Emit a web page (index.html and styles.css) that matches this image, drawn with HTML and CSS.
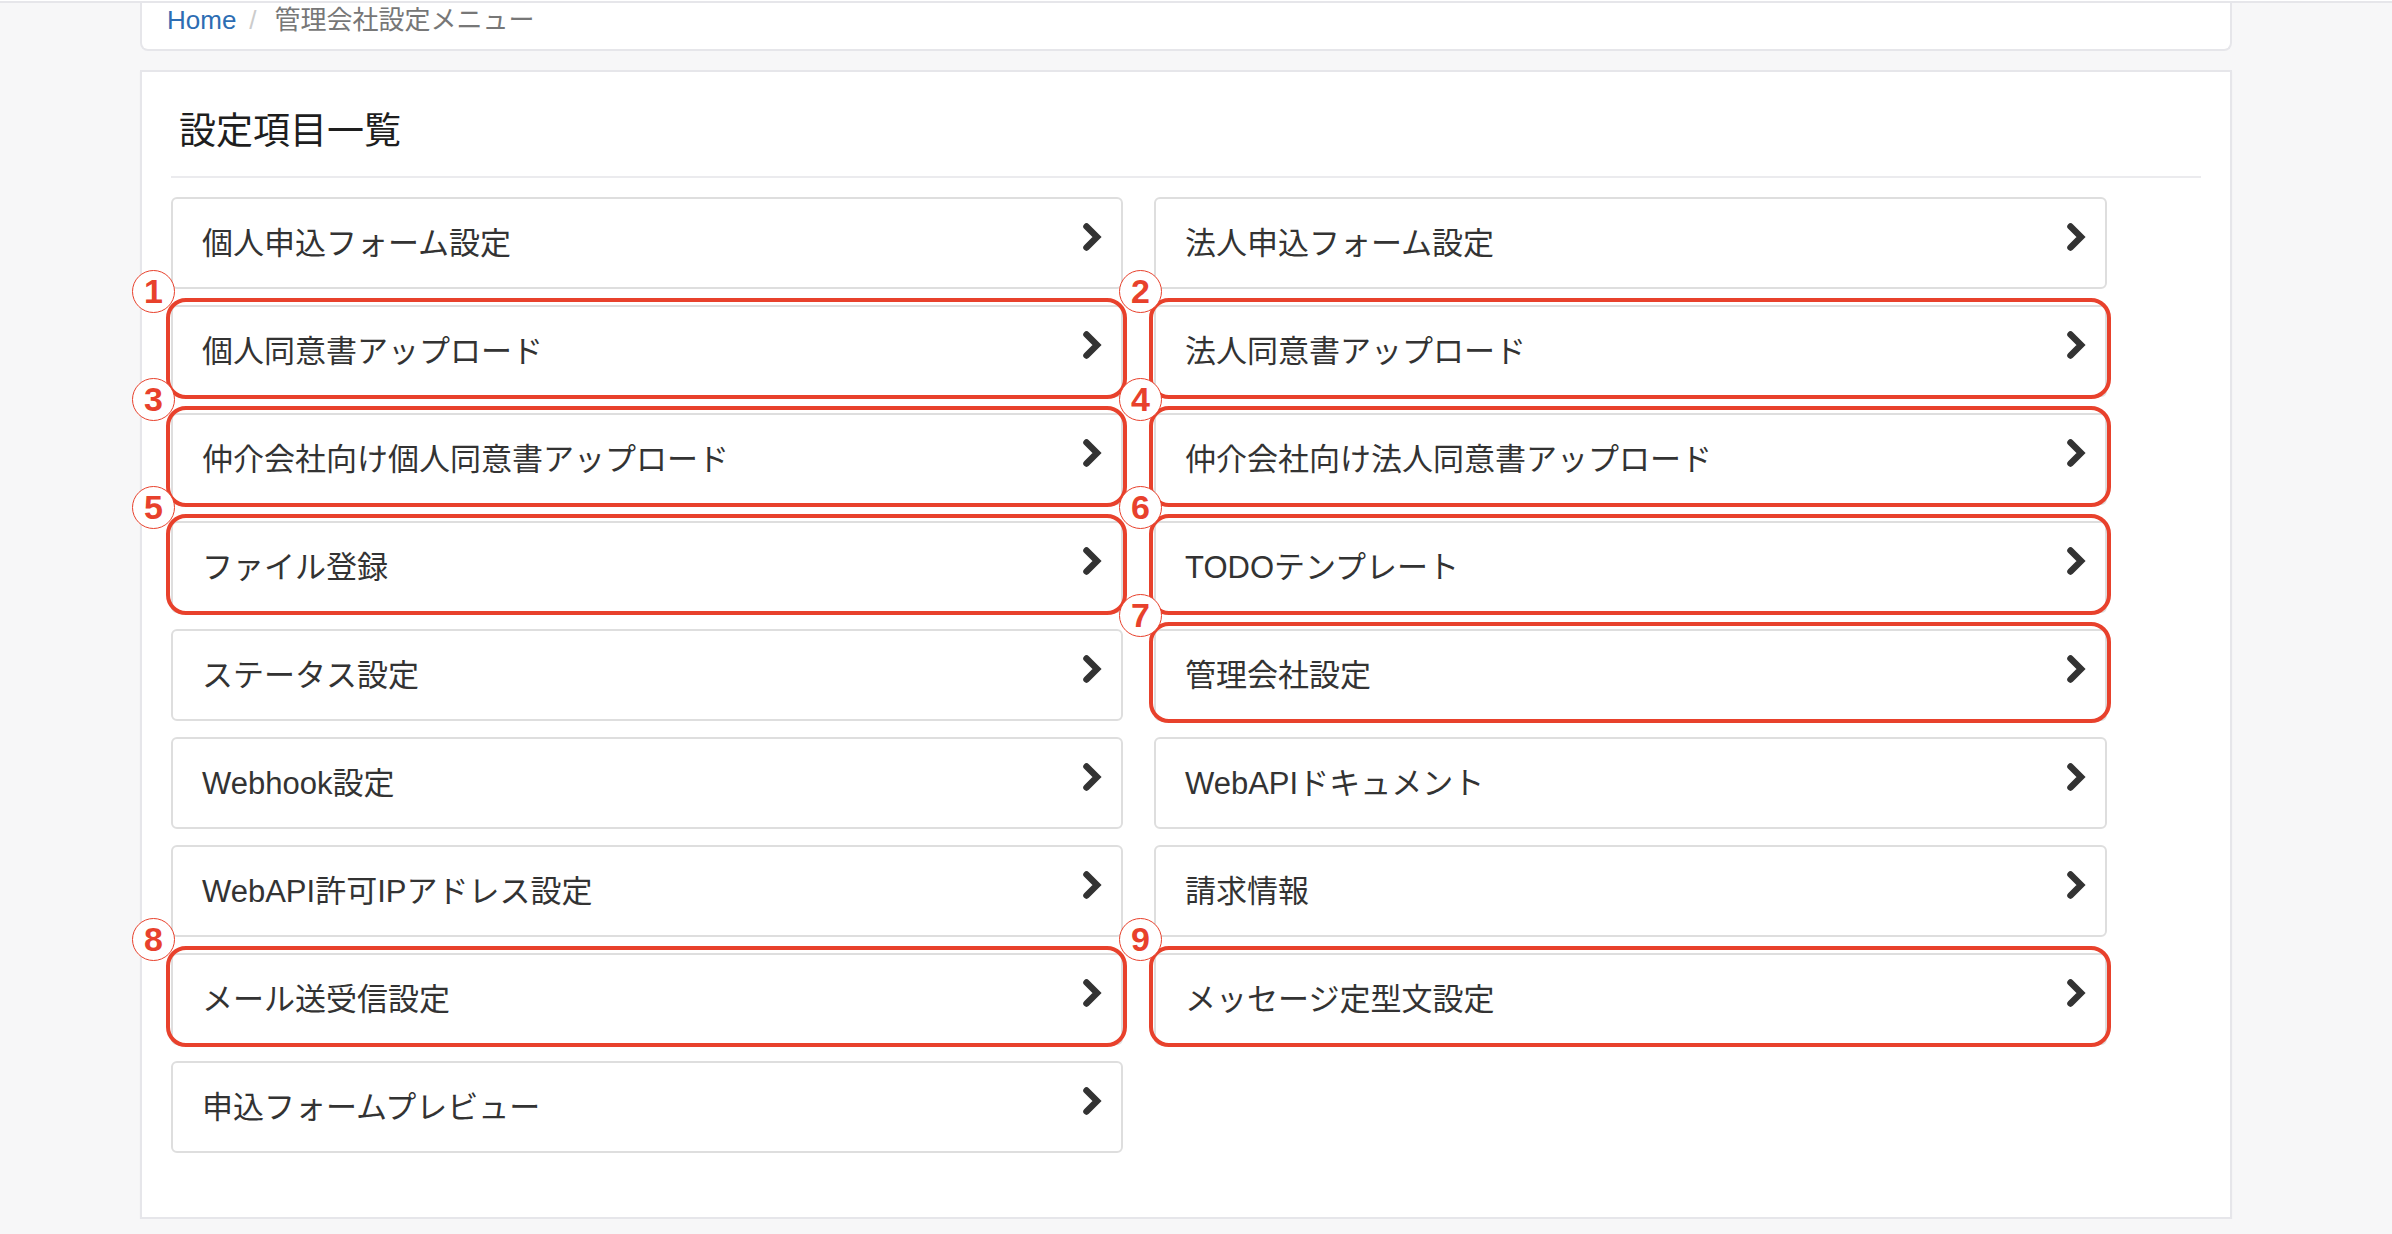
FILE: index.html
```html
<!DOCTYPE html>
<html lang="ja">
<head>
    <meta charset="UTF-8">
    <meta name="viewport" content="width=device-width, initial-scale=1.0">
    <title>管理会社設定メニュー</title>
    <link rel="stylesheet" href="styles.css">
</head>
<body>
    <div class="topline"></div>
    <div class="page">
        <ol class="breadcrumb">
            <li><a href="#">Home</a></li>
            <li class="active">管理会社設定メニュー</li>
        </ol>

        <div class="panel">
            <h3 class="panel-title">設定項目一覧</h3>
            <hr>
            <div class="menu">
                <ul class="menu-col">
                    <li class="menu-item"><a href="#"><span>個人申込フォーム設定</span><svg class="chev" viewBox="0 0 19 28"><path d="M3.5 3.5L14 14L3.5 24.5"/></svg></a></li>
                    <li class="menu-item marked"><span class="mark">1</span><a href="#"><span>個人同意書アップロード</span><svg class="chev" viewBox="0 0 19 28"><path d="M3.5 3.5L14 14L3.5 24.5"/></svg></a></li>
                    <li class="menu-item marked"><span class="mark">3</span><a href="#"><span>仲介会社向け個人同意書アップロード</span><svg class="chev" viewBox="0 0 19 28"><path d="M3.5 3.5L14 14L3.5 24.5"/></svg></a></li>
                    <li class="menu-item marked"><span class="mark">5</span><a href="#"><span>ファイル登録</span><svg class="chev" viewBox="0 0 19 28"><path d="M3.5 3.5L14 14L3.5 24.5"/></svg></a></li>
                    <li class="menu-item"><a href="#"><span>ステータス設定</span><svg class="chev" viewBox="0 0 19 28"><path d="M3.5 3.5L14 14L3.5 24.5"/></svg></a></li>
                    <li class="menu-item"><a href="#"><span>Webhook設定</span><svg class="chev" viewBox="0 0 19 28"><path d="M3.5 3.5L14 14L3.5 24.5"/></svg></a></li>
                    <li class="menu-item"><a href="#"><span>WebAPI許可IPアドレス設定</span><svg class="chev" viewBox="0 0 19 28"><path d="M3.5 3.5L14 14L3.5 24.5"/></svg></a></li>
                    <li class="menu-item marked"><span class="mark">8</span><a href="#"><span>メール送受信設定</span><svg class="chev" viewBox="0 0 19 28"><path d="M3.5 3.5L14 14L3.5 24.5"/></svg></a></li>
                    <li class="menu-item"><a href="#"><span>申込フォームプレビュー</span><svg class="chev" viewBox="0 0 19 28"><path d="M3.5 3.5L14 14L3.5 24.5"/></svg></a></li>
                </ul>
                <ul class="menu-col menu-col-right">
                    <li class="menu-item"><a href="#"><span>法人申込フォーム設定</span><svg class="chev" viewBox="0 0 19 28"><path d="M3.5 3.5L14 14L3.5 24.5"/></svg></a></li>
                    <li class="menu-item marked"><span class="mark">2</span><a href="#"><span>法人同意書アップロード</span><svg class="chev" viewBox="0 0 19 28"><path d="M3.5 3.5L14 14L3.5 24.5"/></svg></a></li>
                    <li class="menu-item marked"><span class="mark">4</span><a href="#"><span>仲介会社向け法人同意書アップロード</span><svg class="chev" viewBox="0 0 19 28"><path d="M3.5 3.5L14 14L3.5 24.5"/></svg></a></li>
                    <li class="menu-item marked"><span class="mark">6</span><a href="#"><span>TODOテンプレート</span><svg class="chev" viewBox="0 0 19 28"><path d="M3.5 3.5L14 14L3.5 24.5"/></svg></a></li>
                    <li class="menu-item marked"><span class="mark">7</span><a href="#"><span>管理会社設定</span><svg class="chev" viewBox="0 0 19 28"><path d="M3.5 3.5L14 14L3.5 24.5"/></svg></a></li>
                    <li class="menu-item"><a href="#"><span>WebAPIドキュメント</span><svg class="chev" viewBox="0 0 19 28"><path d="M3.5 3.5L14 14L3.5 24.5"/></svg></a></li>
                    <li class="menu-item"><a href="#"><span>請求情報</span><svg class="chev" viewBox="0 0 19 28"><path d="M3.5 3.5L14 14L3.5 24.5"/></svg></a></li>
                    <li class="menu-item marked"><span class="mark">9</span><a href="#"><span>メッセージ定型文設定</span><svg class="chev" viewBox="0 0 19 28"><path d="M3.5 3.5L14 14L3.5 24.5"/></svg></a></li>
                </ul>
            </div>
        </div>
    </div>
</body>
</html>
```

FILE: styles.css
```css
body {
    margin: 0;
    background-color: #f7f7f8;
    font-family: "Liberation Sans", "Noto Sans CJK JP", sans-serif;
    color: #333;
}
.topline {
    height: 1px;
    background-color: #fff;
    border-bottom: 2px solid #e6e6ea;
}
.page {
    width: 2092px;
    margin-left: 140px;
}

/* breadcrumb */
.breadcrumb {
    display: flex;
    height: 46px;
    margin: 0;
    padding: 0 25px;
    list-style: none;
    background-color: #fff;
    border: 2px solid #e6e6ea;
    border-top: 0;
    border-radius: 0 0 8px 8px;
    font-size: 26px;
    line-height: 34px;
}
.breadcrumb li + li::before {
    content: "/";
    padding: 0 18px 0 13px;
    color: #ccc;
}
.breadcrumb a {
    color: #2d6db3;
    text-decoration: none;
}
.breadcrumb .active {
    color: #777;
}

/* panel */
.panel {
    margin-top: 19px;
    padding: 0 29px 64px;
    background-color: #fff;
    border: 2px solid #e6e6ea;
    box-shadow: 0 1px 2px rgba(0,0,0,0.03);
}
.panel-title {
    margin: 40px 0 0 8px;
    font-size: 37px;
    font-weight: 400;
    line-height: 40px;
    color: #1e1e1e;
}
.panel hr {
    margin: 24px 0 0;
    border: 0;
    border-top: 2px solid #ebebee;
}

/* menu grid */
.menu {
    display: grid;
    grid-template-columns: 952px 953px;
    column-gap: 31px;
    margin-top: 19px;
}
.menu-col {
    display: flex;
    flex-direction: column;
    gap: 16px;
    margin: 0;
    padding: 0;
    list-style: none;
}
.menu-item {
    position: relative;
}
.menu-item a {
    display: flex;
    align-items: center;
    justify-content: space-between;
    box-sizing: border-box;
    height: 92px;
    padding: 0 19px 0 29px;
    background-color: #fff;
    border: 2px solid #dedede;
    border-radius: 6px;
    color: #333;
    font-size: 31px;
    text-decoration: none;
}
.menu-item a span {
    margin-bottom: 5px;
}
.chev {
    width: 19px;
    height: 28px;
    margin-bottom: 12px;
    flex-shrink: 0;
}
.chev path {
    fill: none;
    stroke: #333;
    stroke-width: 6.5;
    stroke-linecap: round;
    stroke-linejoin: miter;
}

/* red callouts */
.menu-item.marked::after {
    content: "";
    position: absolute;
    top: -7px;
    bottom: -2px;
    left: -5px;
    right: -4px;
    border: 4px solid #e8412c;
    border-radius: 20px;
    pointer-events: none;
}
.mark {
    position: absolute;
    z-index: 2;
    top: -35px;
    left: -39px;
    box-sizing: border-box;
    width: 43px;
    height: 43px;
    border: 1.5px solid #e8412c;
    border-radius: 50%;
    background-color: #fff;
    color: #e8412c;
    font-size: 34px;
    font-weight: 700;
    line-height: 40px;
    text-align: center;
}
.menu-col-right .mark {
    left: -35px;
}
```
